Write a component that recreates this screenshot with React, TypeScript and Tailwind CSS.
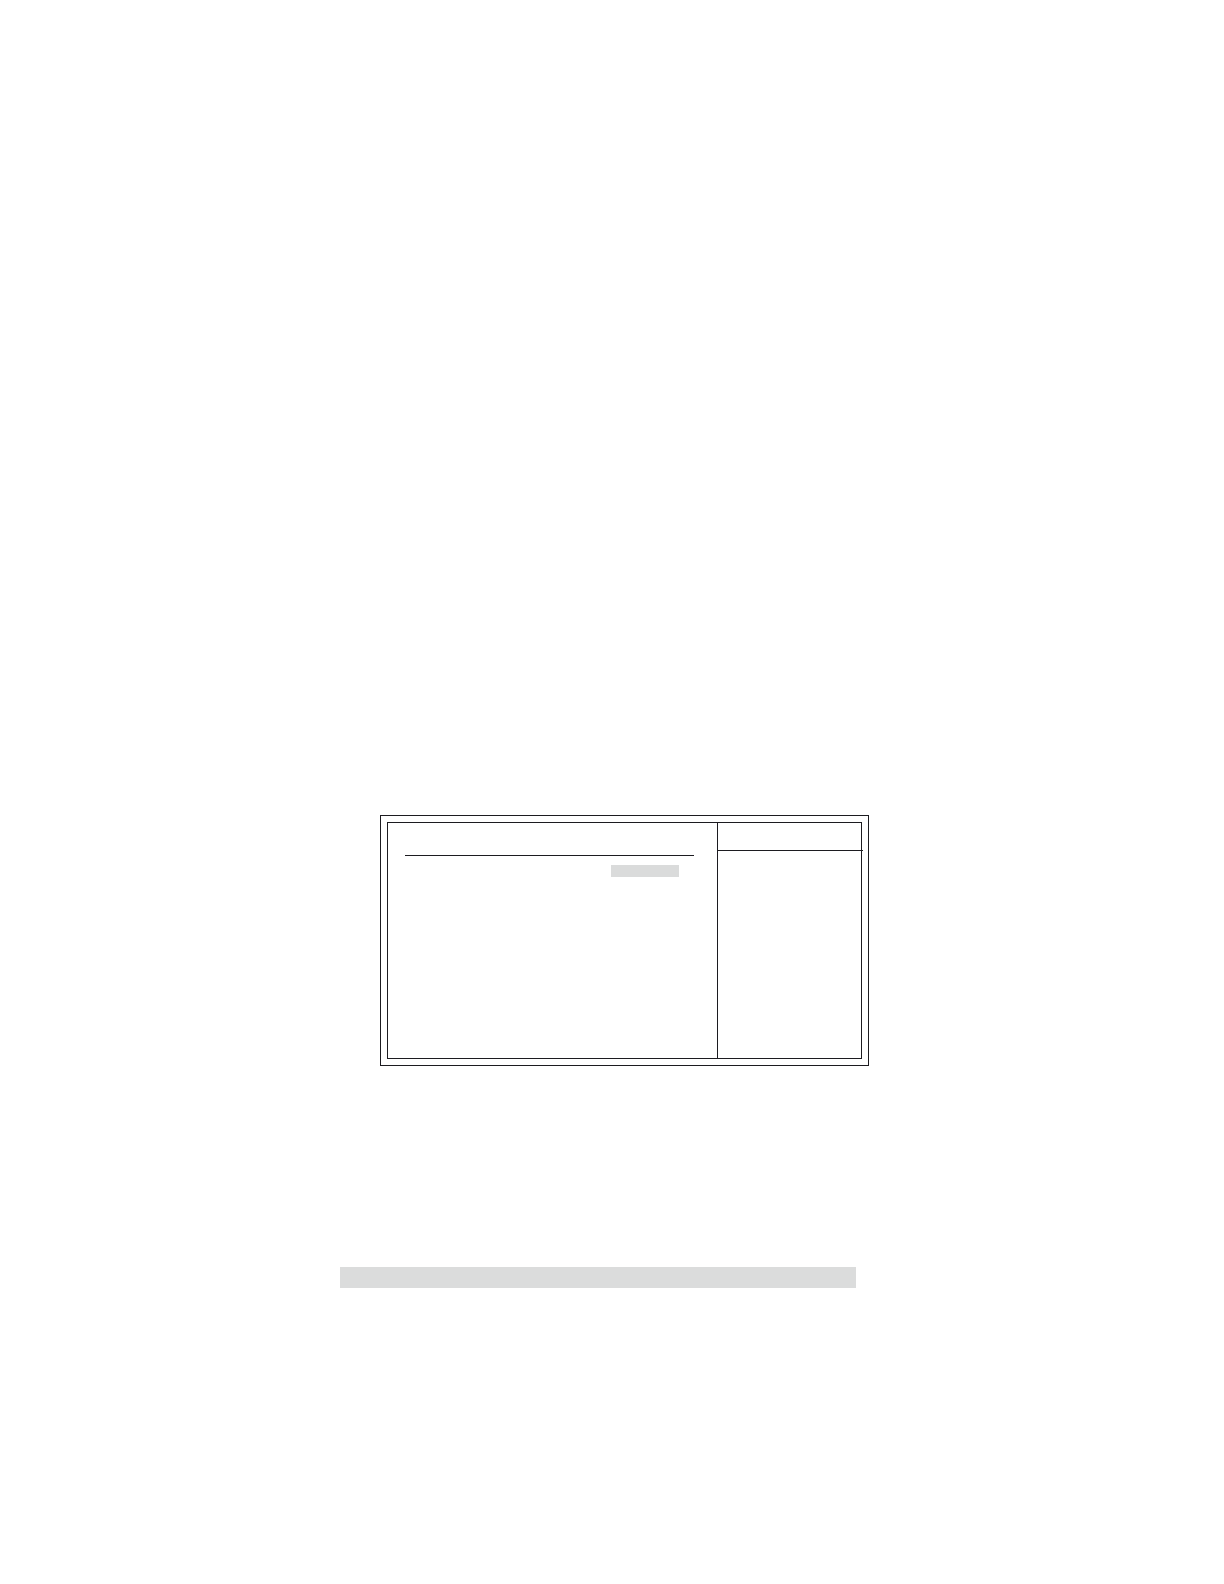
import React from 'react';

const SetupPanel: React.FC = () => (
  <section className="ml-10 border border-[#1c1b20] p-1.5">
    <div className="flex min-h-[237px] border border-[#1c1b20]">
      <div className="flex-1 pl-[17px] pr-[23px]">
        <div className="h-[33px] border-b border-[#1c1b20]" />
        <div className="mt-[9px] mr-[15px] ml-auto h-3 w-[68px] bg-[#dadbdb]" />
      </div>
      <aside className="w-36 border-l border-[#1c1b20]">
        {/* the rule runs slightly past the frame */}
        <div className="-mr-0.5 h-7 border-b border-[#1c1b20]" />
      </aside>
    </div>
  </section>
);

const App: React.FC = () => (
  <main className="min-h-screen bg-white pt-[815px] pr-[355px] pl-[340px]">
    <SetupPanel />
    <div className="mt-[201px] mr-[13px] h-[21px] bg-[#dbdcdc]" />
  </main>
);

export default App;
